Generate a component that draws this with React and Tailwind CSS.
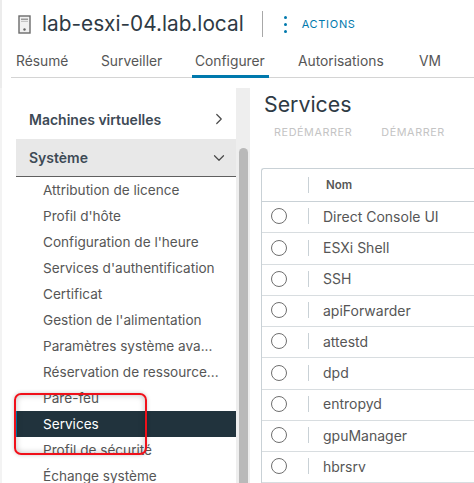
import React from 'react';
import { ChevronRight, ChevronDown } from 'lucide-react';

const tabs = [
  { label: 'Résumé', cls: 'w-[85px]' },
  { label: 'Surveiller', cls: 'w-[94px]' },
  { label: 'Configurer', cls: 'w-[103px]', active: true },
  { label: 'Autorisations', cls: 'w-[121px]' },
  { label: 'VM', cls: 'w-[40px]' },
];

const menu = [
  'Attribution de licence',
  "Profil d'hôte",
  "Configuration de l'heure",
  "Services d'authentification",
  'Certificat',
  "Gestion de l'alimentation",
  'Paramètres système ava...',
  'Réservation de ressource...',
  'Pare-feu',
  'Services',
  'Profil de sécurité',
  'Échange système',
];

const services = [
  'Direct Console UI',
  'ESXi Shell',
  'SSH',
  'apiForwarder',
  'attestd',
  'dpd',
  'entropyd',
  'gpuManager',
  'hbrsrv',
];

function HostIcon() {
  return (
    <svg width="14" height="19" viewBox="0 0 14 19" className="shrink-0">
      <rect x="1" y="1" width="11" height="17" fill="#f1f1f1" stroke="#6b6b6b" strokeWidth="1.4" />
      <rect x="3" y="3.5" width="7" height="1.6" fill="#9a9a9a" />
      <rect x="3" y="6" width="7" height="1" fill="#c4c4c4" />
      <circle cx="6.5" cy="14.5" r="1.2" fill="#666" />
    </svg>
  );
}

export default function App() {
  return (
    <div className="relative w-[474px] h-[483px] overflow-hidden bg-white font-['Inter',sans-serif] text-[#565656]">
      <div className="h-[88px] border-l-2 border-[#ececec]">
        <div className="flex items-center h-[48px] pl-[16px]">
          <HostIcon />
          <h1 className="ml-[10px] text-[20.8px] leading-none text-[#2e3a44]">lab-esxi-04.lab.local</h1>
          <div className="ml-[18px] w-px h-[26px] bg-[#a8a8a8]" />
          <div className="ml-[21px] flex flex-col gap-[4px]">
            <span className="w-[3px] h-[3px] rounded-full bg-[#0079ad]" />
            <span className="w-[3px] h-[3px] rounded-full bg-[#0079ad]" />
            <span className="w-[3px] h-[3px] rounded-full bg-[#0079ad]" />
          </div>
          <span className="ml-[15px] text-[11px] tracking-[0.7px] text-[#0079ad]">ACTIONS</span>
        </div>
        <div className="ml-[9px] h-[30px] flex border-b border-[#d4d4d4]">
          {tabs.map((t) => (
            <div key={t.label} className={`${t.cls} h-[30px] flex items-center`}>
              <span className={`h-[30px] flex items-center px-[3px] ml-[2px] text-[13.8px] ${t.active ? 'border-b-[3px] border-[#0079ad] w-[77px]' : 'pb-[3px]'}`}>
                {t.label}
              </span>
            </div>
          ))}
        </div>
      </div>

      <div className="flex h-[395px]">
        <aside className="w-[236px] pl-[14px] shrink-0 overflow-hidden border-l-2 border-[#f3f3f3]">
          <div className="h-[51px] pt-[11px] pl-[13px] pr-[8px] flex items-center justify-between">
            <span className="text-[14px] font-semibold text-[#3d4a55]">Machines virtuelles</span>
            <ChevronRight size={18} strokeWidth={1.6} className="text-[#4a4a4a]" />
          </div>
          <div className="h-[38px] pl-[13px] pr-[8px] flex items-center justify-between bg-[#e8e8e8] border-b border-[#5f5f5f]">
            <span className="text-[14px] font-semibold text-[#3d4a55]">Système</span>
            <ChevronDown size={18} strokeWidth={1.6} className="text-[#4a4a4a]" />
          </div>
          <ul>
            {menu.map((m) => (
              <li
                key={m}
                className={`h-[26px] flex items-center whitespace-nowrap text-[13.6px] ${m === 'Services' ? 'pl-[26px] bg-[#21333d] text-white border-l border-[#0079ad]' : 'pl-[27px] text-[#565656]'}`}
              >
                {m}
              </li>
            ))}
          </ul>
        </aside>

        <div className="w-[14px] shrink-0 bg-[#eeeeee] pt-[60px] pl-[3px]">
          <div className="w-[9px] h-full rounded-t-[5px] bg-[#b9b9b9]" />
        </div>

        <main className="flex-1 pl-[11px] min-w-0">
          <h2 className="pl-[3px] pt-[1px] text-[21.3px] leading-[30px] text-[#2e3a44]">Services</h2>
          <div className="mt-[6px] ml-[13px] flex gap-[29px] whitespace-nowrap text-[10.8px] tracking-[0.6px] text-[#c4c4c4]">
            <span>REDÉMARRER</span>
            <span>DÉMARRER</span>
            <span>ARRÊTER</span>
          </div>
          <div className="mt-[27px] w-[240px] border-l border-t border-[#c9d1d6] rounded-tl-[3px]">
            <div className="h-[33px] flex items-center border-b border-[#c9d1d6]">
              <div className="w-[47px] h-[16px] border-r border-[#c9d1d6]" />
              <span className="ml-[17px] text-[11.5px] font-semibold text-[#565656]">Nom</span>
            </div>
            {services.map((s) => (
              <div key={s} className="h-[31.25px] pb-[2px] flex items-center border-b border-[#d8dde0]">
                <div className="w-[47px] h-[16px] border-r border-[#c9d1d6] flex items-center pl-[9px]">
                  <span className="w-[16px] h-[16px] rounded-full border border-[#6f6f6f] bg-white" />
                </div>
                <span className="ml-[14px] text-[14px] text-[#565656]">{s}</span>
              </div>
            ))}
          </div>
        </main>
      </div>

      <div className="absolute left-[14px] top-[393px] w-[133px] h-[62px] rounded-[7px] border-2 border-[#f0101a] shadow-[inset_0_0_6px_rgba(0,0,0,0.25),0_0_4px_rgba(0,0,0,0.2)]" />
    </div>
  );
}
